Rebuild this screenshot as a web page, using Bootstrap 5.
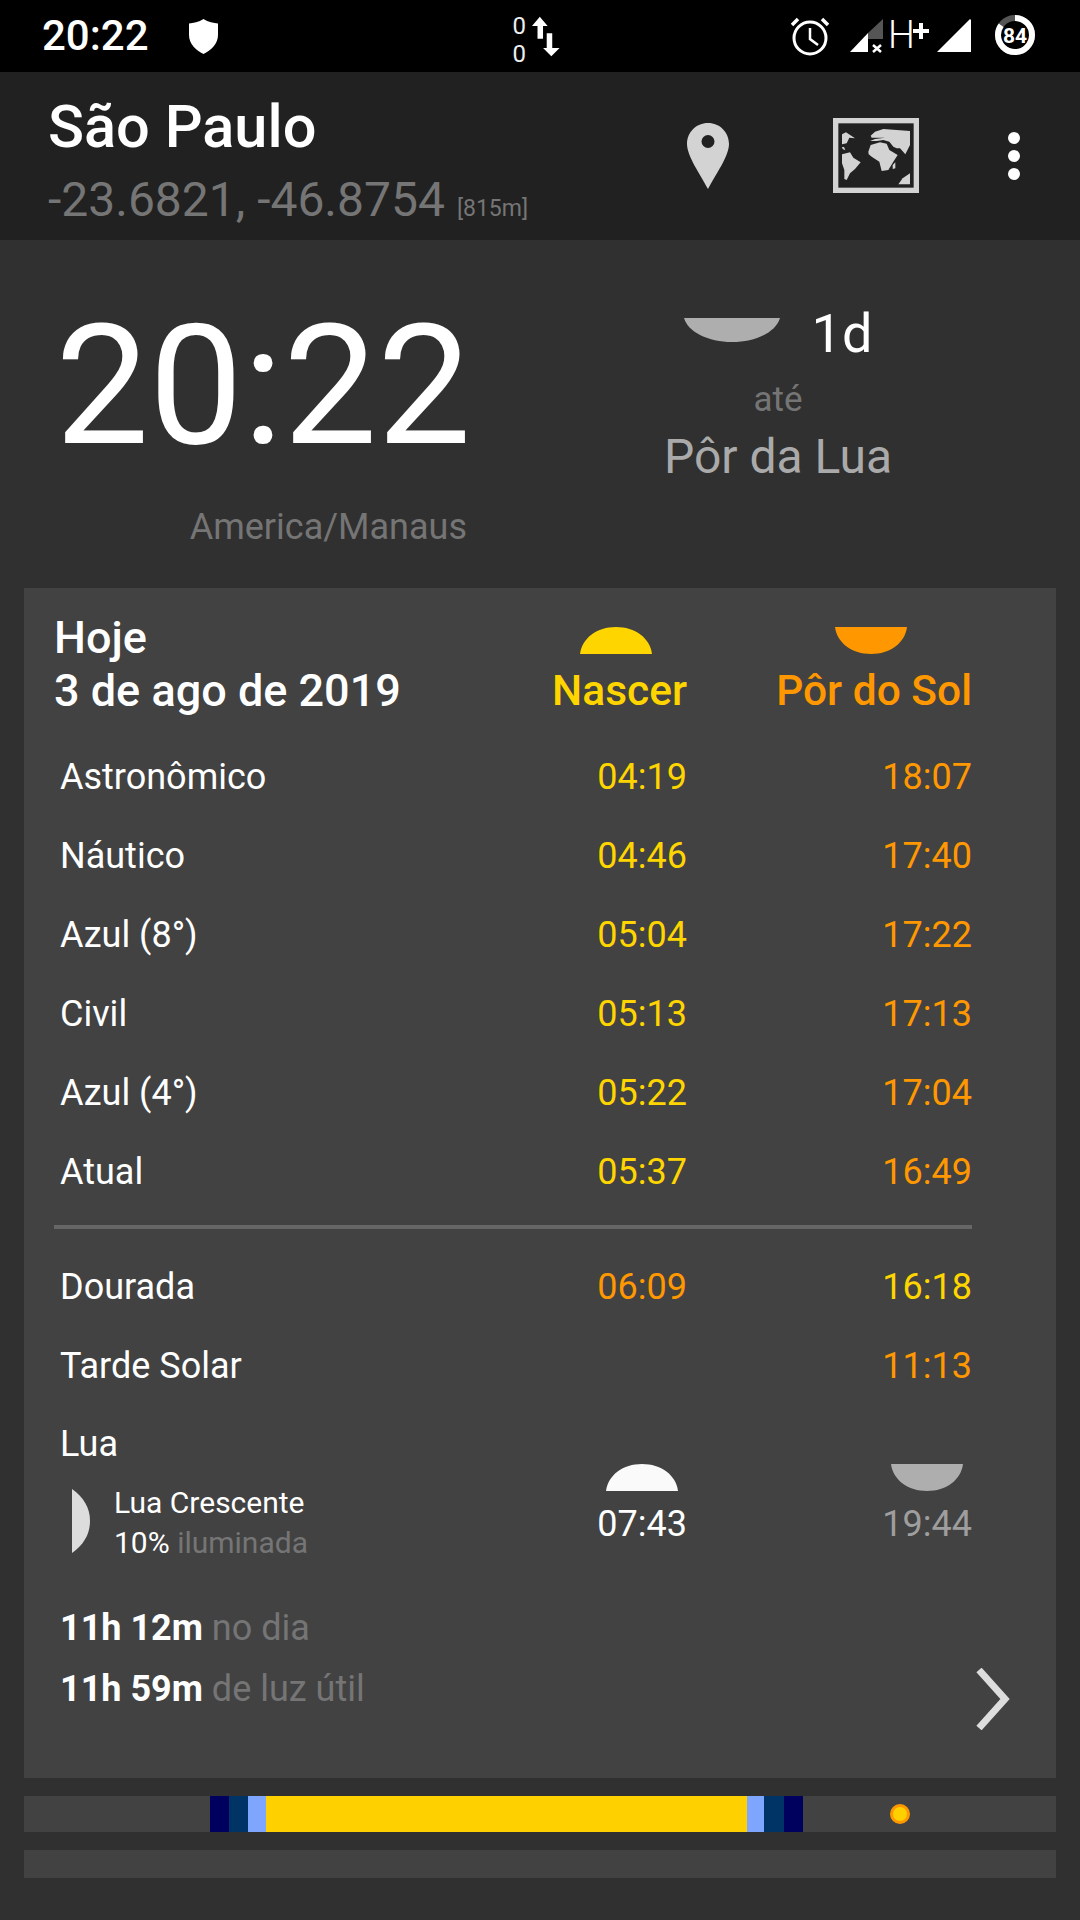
<!DOCTYPE html>
<html lang="pt">
<head>
<meta charset="utf-8">
<title>Sun times</title>
<link rel="stylesheet" href="https://cdn.jsdelivr.net/npm/bootstrap@5.3.0/dist/css/bootstrap.min.css">
<style>
html,body{background:#303030;margin:0}
.app{width:1080px;height:1920px;font-family:Roboto,sans-serif;color:#fff;background:#303030;overflow:hidden}
.sbar{height:72px;background:#000}
.sb-time{font-size:42px;line-height:72px;margin-left:42px;width:146px;font-weight:500}
.sb-shield{width:31px;height:35px;margin-top:19px}
.sb-net{margin-left:291px;margin-top:12px;width:50px}
.sb-net-txt{font-size:24px;line-height:28px;width:20px;color:#eee}
.sb-arrows{width:30px;height:44px;margin-top:3px}
.sb-alarm{width:40px;height:42px;margin-left:230px;margin-top:15px}
.sb-sig{width:34px;height:34px;margin-top:19px;margin-left:19px}
.sb-h{font-size:38px;line-height:70px;font-weight:300;margin-left:5px;width:25px}
.sb-plus{width:16px;height:16px;margin-top:23px;margin-right:8px}
.sb-sig2{width:34px;height:34px;margin-top:19px}
.sb-batt{width:44px;height:44px;margin-top:13px;margin-left:22px}
.tbar{height:168px;background:#212121;padding-left:48px}
.tb-name{font-size:59.500px;line-height:66px;font-weight:500;padding-top:22px;height:90px}
.tb-coord{font-size:48px;line-height:56px;color:#757575;margin-top:10px}
.tb-alt{font-size:23px;color:#757575;margin-left:12px}
.tb-text{width:639px}
.tb-pin{width:42px;height:66px;margin-top:51px}
.tb-map{width:86px;height:75px;margin-top:46px;margin-left:104px}
.tb-dots{width:12px;height:48px;margin-top:60px;margin-left:89px}
.clk{height:348px}
.clk-l{width:558px;padding-right:91px;text-align:right}
.clk-time{font-size:167px;line-height:170px;margin-top:61px;height:194px;margin-right:-4px}
.clk-tz{font-size:36px;line-height:44px;color:#757575;margin-top:10px}
.clk-r{width:440px;text-align:center}
.clk-head{margin-top:67px;height:59px}
.clk-dome{width:96px;height:24px;margin-top:11px}
.clk-d{font-size:54px;line-height:54px;margin-left:32px;font-weight:400}
.clk-ate{font-size:35px;line-height:40px;color:#757575;margin-top:14px}
.clk-ev{font-size:48px;line-height:52px;color:#aaa;margin-top:11px}
.daycard{margin:0 24px;height:1190px;background:#424242;padding:23px 84px 0 36px}
.hd-row{margin-bottom:20.700px}
.hd-title{font-size:45px;line-height:53px;font-weight:500;margin-left:-6px;white-space:nowrap}
.c-lab{flex:1 1 auto;min-width:0}
.c-a{width:300px;flex:none;text-align:right}
.c-b{width:285px;flex:none;text-align:right}
.hd-name{font-size:42.500px;line-height:53px;font-weight:500}
.dome{display:block;width:72px;height:27px;margin-top:16px;margin-bottom:10px;margin-left:auto}
.dome-a{margin-right:35px}
.dome-b{margin-right:65px}
.trow{height:79px;font-size:36px;line-height:79px}
.t{font-size:36px}
.yel{color:#ffd500}
.ora{color:#ff9800}
.rule{height:4px;background:#666;margin:13.500px 0 18.500px -6px;width:918px}
.lua-lab{font-size:36px;line-height:77.500px}
.phase{height:80px;padding-left:12px}
.phase-ic{width:18px;height:64px;margin-top:6px}
.phase-t{margin-left:24px;font-size:30px;line-height:40px;white-space:nowrap}
.gr{color:#757575}
.moon-c{padding-bottom:17px}
.moon-d{display:block;width:72px;height:27px;margin-left:auto;margin-right:9px;margin-bottom:11px}
.m-t{font-size:36px;line-height:44px}
.m-dim{color:#9e9e9e}
.dur{margin-top:35px;margin-right:-38px}
.dur-t{font-size:36px;line-height:61px}
.dur-t b{font-weight:700}
.chev{width:34px;height:62px;margin-bottom:-10px}
.tl{margin:18px 24px 0;height:36px;background:#424242;position:relative}
.seg{height:36px;flex:none}
.sun-dot{position:absolute;left:866px;top:8px;width:20px;height:20px;border-radius:50%;background:#ffd000;border:3px solid #ff9800}
.tl2{margin:18px 24px 0;height:28px;background:#424242}
</style>
</head>
<body>
<div class="app">
  <div class="sbar d-flex">
    <div class="sb-time">20:22</div>
    <svg class="sb-shield" viewBox="0 0 31 35"><path d="M15.500 0C11 3 5 4 1 4.500V16C1 25 8 31.500 15.500 35 23 31.500 30 25 30 16V4.500C26 4 20 3 15.500 0Z" fill="#fff"/></svg>
    <div class="sb-net d-flex">
      <div class="sb-net-txt text-center">0<br>0</div>
      <svg class="sb-arrows ms-1" viewBox="0 0 30 44"><path d="M8.500 0 17 10H12V24H6V10H0ZM16 18H22V34H30L21 43 12 34H16Z" fill="#fff"/></svg>
    </div>
    <svg class="sb-alarm" viewBox="0 0 40 42" fill="none" stroke="#fff" stroke-width="3"><circle cx="20" cy="23" r="16"/><path d="M20 13V24L28 30" stroke-width="2.500"/><path d="M2 10 8 4M38 10 32 4" stroke-width="3.500"/></svg>
    <svg class="sb-sig" viewBox="0 0 34 34"><path d="M1 33 19 14V33Z" fill="#fff"/><path d="M19 14 34 0V20H19Z" fill="#555"/><path d="M24 26 32 33M32 26 24 33" stroke="#fff" stroke-width="2.500"/></svg>
    <div class="sb-h">H</div>
    <svg class="sb-plus" viewBox="0 0 16 16"><path d="M6 0H10V6H16V10H10V16H6V10H0V6H6Z" fill="#fff"/></svg>
    <svg class="sb-sig2" viewBox="0 0 34 34"><path d="M0 33 33 0 34 1V33Z" fill="#fff"/></svg>
    <svg class="sb-batt" viewBox="0 0 44 44"><circle cx="22" cy="22" r="17" fill="none" stroke="#555" stroke-width="6"/><circle cx="22" cy="22" r="17" fill="none" stroke="#fff" stroke-width="6" stroke-dasharray="90 107" transform="rotate(-90 22 22)"/><text x="22" y="30" text-anchor="middle" font-size="21" font-weight="700" fill="#fff" font-family="Roboto">84</text></svg>
  </div>

  <div class="tbar d-flex">
    <div class="tb-text">
      <div class="tb-name">São Paulo</div>
      <div class="tb-coord text-nowrap">-23.6821, -46.8754<span class="tb-alt">[815m]</span></div>
    </div>
    <svg class="tb-pin" viewBox="0 0 42 66"><path fill-rule="evenodd" d="M21 0C9 0 0 9.500 0 21 0 33 13 51 21 66 29 51 42 33 42 21 42 9.500 33 0 21 0ZM21 12A6.300 6.300 0 1 1 21 25 6.300 6.300 0 1 1 21 12Z" fill="#d3d3d3"/></svg>
    <svg class="tb-map" viewBox="9 9 258 225">
      <rect x="17" y="17" width="242" height="209" fill="none" stroke="#d3d3d3" stroke-width="16"/>
      <g fill="#d3d3d3">
        <path d="M36 58 48 52 75 70 58 68 50 85 36 88Z"/>
        <path d="M36 96 42 96 46 106 38 102Z"/>
        <path d="M36 118 60 112 70 128 92 142 75 162 60 175 50 195 43 192 43 165 36 145Z"/>
        <path d="M122 62 135 50 160 42 200 45 240 48 240 90 226 118 210 100 200 100 190 95 178 80 160 75 140 78 120 78 135 72 165 68 125 68Z"/>
        <path d="M115 110 122 90 150 82 170 86 178 105 203 120 190 140 175 165 155 168 148 140 125 125 116 118Z"/>
        <path d="M188 150 196 142 196 160 188 162Z"/>
        <path d="M205 208 218 190 240 175 240 208Z"/>
      </g>
    </svg>
    <svg class="tb-dots" viewBox="0 0 12 48"><circle cx="6" cy="6" r="6" fill="#fff"/><circle cx="6" cy="24" r="6" fill="#fff"/><circle cx="6" cy="42" r="6" fill="#fff"/></svg>
  </div>

  <div class="clk d-flex">
    <div class="clk-l">
      <div class="clk-time">20:22</div>
      <div class="clk-tz">America/Manaus</div>
    </div>
    <div class="clk-r">
      <div class="clk-head d-flex justify-content-center">
        <svg class="clk-dome" viewBox="0 0 96 24"><path d="M0 0H96C92 14 72 24 48 24 24 24 4 14 0 0Z" fill="#aeaeae"/></svg>
        <div class="clk-d">1d</div>
      </div>
      <div class="clk-ate">até</div>
      <div class="clk-ev">Pôr da Lua</div>
    </div>
  </div>

  <div class="daycard">
    <div class="hd-row d-flex align-items-end">
      <div class="c-lab hd-title">Hoje<br>3 de ago de 2019</div>
      <div class="c-a hd-name yel">
        <svg class="dome dome-a" viewBox="0 0 72 27"><path d="M0 27C2 11 17 0 36 0 55 0 70 11 72 27Z" fill="#ffd500"/></svg>
        Nascer
      </div>
      <div class="c-b hd-name ora">
        <svg class="dome dome-b" viewBox="0 0 72 27"><path d="M0 0H72C70 16 55 27 36 27 17 27 2 16 0 0Z" fill="#ff9800"/></svg>
        Pôr do Sol
      </div>
    </div>
    <div class="trow d-flex"><div class="c-lab">Astronômico</div><div class="c-a t yel">04:19</div><div class="c-b t ora">18:07</div></div>
    <div class="trow d-flex"><div class="c-lab">Náutico</div><div class="c-a t yel">04:46</div><div class="c-b t ora">17:40</div></div>
    <div class="trow d-flex"><div class="c-lab">Azul (8°)</div><div class="c-a t yel">05:04</div><div class="c-b t ora">17:22</div></div>
    <div class="trow d-flex"><div class="c-lab">Civil</div><div class="c-a t yel">05:13</div><div class="c-b t ora">17:13</div></div>
    <div class="trow d-flex"><div class="c-lab">Azul (4°)</div><div class="c-a t yel">05:22</div><div class="c-b t ora">17:04</div></div>
    <div class="trow d-flex"><div class="c-lab">Atual</div><div class="c-a t yel">05:37</div><div class="c-b t ora">16:49</div></div>
    <div class="rule"></div>
    <div class="trow d-flex"><div class="c-lab">Dourada</div><div class="c-a t ora">06:09</div><div class="c-b t yel">16:18</div></div>
    <div class="trow d-flex"><div class="c-lab">Tarde Solar</div><div class="c-a t"></div><div class="c-b t ora">11:13</div></div>
    <div class="d-flex">
      <div class="c-lab">
        <div class="lua-lab">Lua</div>
        <div class="phase d-flex">
          <svg class="phase-ic" viewBox="0 0 18 60" preserveAspectRatio="none"><path d="M0 0C12 8 18 18 18 30 18 42 12 52 0 60Z" fill="#ddd"/></svg>
          <div class="phase-t">Lua Crescente<br>10% <span class="gr">iluminada</span></div>
        </div>
      </div>
      <div class="c-a moon-c align-self-end">
        <svg class="moon-d" viewBox="0 0 72 27" preserveAspectRatio="none"><path d="M0 27C2 11 17 0 36 0 55 0 70 11 72 27Z" fill="#fafafa"/></svg>
        <div class="m-t">07:43</div>
      </div>
      <div class="c-b moon-c align-self-end">
        <svg class="moon-d" viewBox="0 0 72 27" preserveAspectRatio="none"><path d="M0 0H72C70 16 55 27 36 27 17 27 2 16 0 0Z" fill="#aeaeae"/></svg>
        <div class="m-t m-dim">19:44</div>
      </div>
    </div>
    <div class="dur d-flex justify-content-between align-items-end">
      <div class="dur-t"><b>11h 12m</b> <span class="gr">no dia</span><br><b>11h 59m</b> <span class="gr">de luz útil</span></div>
      <svg class="chev" viewBox="0 0 34 62"><path d="M3 2 29 31 3 60" fill="none" stroke="#ddd" stroke-width="7"/></svg>
    </div>
  </div>

  <div class="tl d-flex">
    <div class="seg" style="width:186px"></div>
    <div class="seg" style="width:18.500px;background:#00005f"></div>
    <div class="seg" style="width:19.500px;background:#003366"></div>
    <div class="seg" style="width:18px;background:#7fa6ff"></div>
    <div class="seg" style="width:481px;background:#ffd000"></div>
    <div class="seg" style="width:17px;background:#7fa6ff"></div>
    <div class="seg" style="width:20px;background:#003366"></div>
    <div class="seg" style="width:19px;background:#00005f"></div>
    <div class="sun-dot"></div>
  </div>
  <div class="tl2"></div>
</div>
<script src="https://cdn.jsdelivr.net/npm/bootstrap@5.3.0/dist/js/bootstrap.bundle.min.js"></script>
</body>
</html>
